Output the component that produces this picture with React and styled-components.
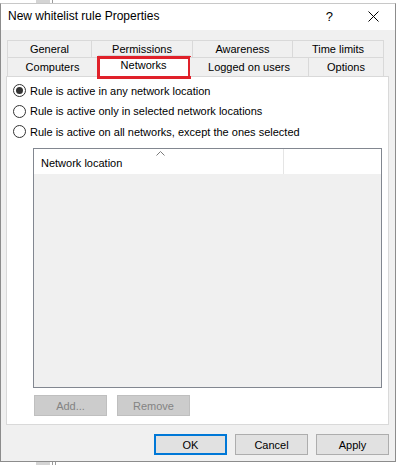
import React from 'react';
import styled, { createGlobalStyle } from 'styled-components';

const GlobalStyle = createGlobalStyle`
    html, body {
        margin: 0;
        padding: 0;
        background: #ffffff;
    }
    body {
        font-family: "Liberation Sans", Arial, sans-serif;
        font-size: 11px;
        color: #000;
    }
`;

const rowOne = ['General', 'Permissions', 'Awareness', 'Time limits'];
const rowTwo = ['Computers', 'Networks', 'Logged on users', 'Options'];

const radios = [
    { label: 'Rule is active in any network location', checked: true },
    { label: 'Rule is active only in selected network locations', checked: false },
    { label: 'Rule is active on all networks, except the ones selected', checked: false },
];

const CloseIcon = () => (
    <svg width="11" height="11" viewBox="0 0 11 11">
        <path d="M0.5 0.5 L10.5 10.5 M10.5 0.5 L0.5 10.5" stroke="#000" strokeWidth="1" fill="none" />
    </svg>
);

const SortArrow = () => (
    <svg width="9" height="5" viewBox="0 0 9 5">
        <path d="M0.5 4.5 L4.5 0.5 L8.5 4.5" stroke="#7a7a7a" strokeWidth="1" fill="none" />
    </svg>
);

const App = () => {
    return (
        <>
            <GlobalStyle />
            <Backdrop>
                <BackdropBlock />
                <BackdropLine />
            </Backdrop>
            <Window>
                <TitleBar>
                    <Title>New whitelist rule Properties</Title>
                    <TitleButtons>
                        <TitleButton>?</TitleButton>
                        <TitleButton><CloseIcon /></TitleButton>
                    </TitleButtons>
                </TitleBar>
                <Body>
                    <Tabs>
                        <TabRow columns="85px 101px 100px 91px">
                            {rowOne.map((t) => <Tab key={t}>{t}</Tab>)}
                        </TabRow>
                        <TabRow columns="91px 92px 119px 75px">
                            {rowTwo.map((t) => (
                                <Tab key={t} selected={t === 'Networks'}>
                                    {t}
                                    {t === 'Networks' && <Highlight />}
                                </Tab>
                            ))}
                        </TabRow>
                    </Tabs>
                    <Panel>
                        <RadioGroup>
                            {radios.map((r) => (
                                <RadioRow key={r.label}>
                                    <RadioCircle checked={r.checked} />
                                    <span>{r.label}</span>
                                </RadioRow>
                            ))}
                        </RadioGroup>
                        <ListView>
                            <ListHeader>
                                <HeaderCell>
                                    Network location
                                    <SortMark><SortArrow /></SortMark>
                                </HeaderCell>
                                <HeaderFill />
                            </ListHeader>
                            <ListBody />
                        </ListView>
                        <ListButtons>
                            <Button disabled>Add...</Button>
                            <Button disabled>Remove</Button>
                        </ListButtons>
                    </Panel>
                    <Footer>
                        <Button primary>OK</Button>
                        <Button>Cancel</Button>
                        <Button>Apply</Button>
                    </Footer>
                </Body>
            </Window>
            <Backdrop>
                <BackdropBlock />
                <BackdropLine />
                <BackdropLine />
            </Backdrop>
        </>
    );
};

const Backdrop = styled.div`
    display: flex;
    height: 3px;
    padding-left: 36px;
    gap: 2px;
`;

const BackdropBlock = styled.div`
    width: 14px;
    background: #d4d4d4;
`;

const BackdropLine = styled.div`
    width: 1px;
    background: #9a9a9a;
`;

const Window = styled.div`
    width: 394px;
    height: 457px;
    border: 1px solid #8c8c8c;
    border-top-color: #c8c8c8;
    display: flex;
    flex-direction: column;
    background: #f0f0f0;
`;

const TitleBar = styled.div`
    height: 29px;
    background: #ffffff;
    display: flex;
    align-items: center;
    justify-content: space-between;
    padding-left: 7px;
`;

const Title = styled.div`
    font-size: 12px;
    padding-bottom: 2px;
`;

const TitleButtons = styled.div`
    display: flex;
    align-items: center;
    padding-right: 16px;
    gap: 35px;
`;

const TitleButton = styled.div`
    display: flex;
    align-items: center;
    font-size: 13px;
    height: 14px;
`;

const Body = styled.div`
    flex: 1;
    display: flex;
    flex-direction: column;
    padding: 10px 6px 6px 5px;
`;

const Tabs = styled.div`
    display: flex;
    flex-direction: column;
    padding-left: 1px;
    position: relative;
    z-index: 1;
`;

const TabRow = styled.div`
    display: grid;
    grid-template-columns: ${({ columns }) => columns};
    height: 17px;

    & + & {
        height: 19px;
    }
`;

const Tab = styled.div`
    position: relative;
    display: flex;
    align-items: center;
    justify-content: center;
    padding-top: 1px;
    border: 1px solid #d9d9d9;
    border-bottom: none;
    border-left: none;
    background: ${({ selected }) => (selected ? '#ffffff' : '#f0f0f0')};
    margin-top: ${({ selected }) => (selected ? '-2px' : '0')};
    margin-bottom: ${({ selected }) => (selected ? '-1px' : '0')};
    padding-bottom: ${({ selected }) => (selected ? '4px' : '0')};

    &:first-child {
        border-left: 1px solid #d9d9d9;
    }
`;

const Highlight = styled.div`
    position: absolute;
    top: 0;
    left: -1px;
    right: -2px;
    bottom: -2px;
    border: 3px solid #e0212a;
    pointer-events: none;
`;

const Panel = styled.div`
    background: #ffffff;
    border: 1px solid #d9d9d9;
    padding: 4px 6px 8px 6px;
    display: flex;
    flex-direction: column;
`;

const RadioGroup = styled.div`
    display: flex;
    flex-direction: column;
`;

const RadioRow = styled.label`
    display: flex;
    align-items: center;
    height: 20.5px;
    gap: 4px;
`;

const RadioCircle = styled.span`
    width: 11px;
    height: 11px;
    border: 1px solid #333333;
    border-radius: 50%;
    background: #ffffff;
    position: relative;
    flex-shrink: 0;

    &::after {
        content: '';
        display: ${({ checked }) => (checked ? 'block' : 'none')};
        position: absolute;
        left: 2px;
        top: 2px;
        width: 7px;
        height: 7px;
        border-radius: 50%;
        background: #333333;
    }
`;

const ListView = styled.div`
    margin: 6px 0 0 20px;
    height: 238px;
    border: 1px solid #828790;
    display: flex;
    flex-direction: column;
`;

const ListHeader = styled.div`
    display: flex;
    height: 25px;
    background: #ffffff;
`;

const HeaderCell = styled.div`
    position: relative;
    width: 250px;
    border-right: 1px solid #e5e5e5;
    display: flex;
    align-items: center;
    padding-left: 7px;
    padding-top: 2px;
    box-sizing: border-box;
`;

const SortMark = styled.span`
    position: absolute;
    top: 2px;
    left: 122px;
    display: flex;
`;

const HeaderFill = styled.div`
    flex: 1;
`;

const ListBody = styled.div`
    flex: 1;
    background: #f0f0f0;
`;

const ListButtons = styled.div`
    display: flex;
    gap: 10px;
    margin: 7px 0 0 21px;
`;

const Button = styled.button`
    width: 73px;
    height: 21px;
    box-sizing: border-box;
    font-family: "Liberation Sans", Arial, sans-serif;
    font-size: 11px;
    padding: 0;
    border: ${({ primary }) => (primary ? '2px solid #0078d7' : '1px solid #adadad')};
    background: ${({ disabled }) => (disabled ? '#cccccc' : '#e1e1e1')};
    border-color: ${({ disabled, primary }) => (disabled ? '#bfbfbf' : primary ? '#0078d7' : '#adadad')};
    color: ${({ disabled }) => (disabled ? '#838383' : '#000000')};
`;

const Footer = styled.div`
    display: flex;
    justify-content: flex-end;
    gap: 8px;
    margin-top: 9px;
    padding-right: 0;
`;

export default App;
